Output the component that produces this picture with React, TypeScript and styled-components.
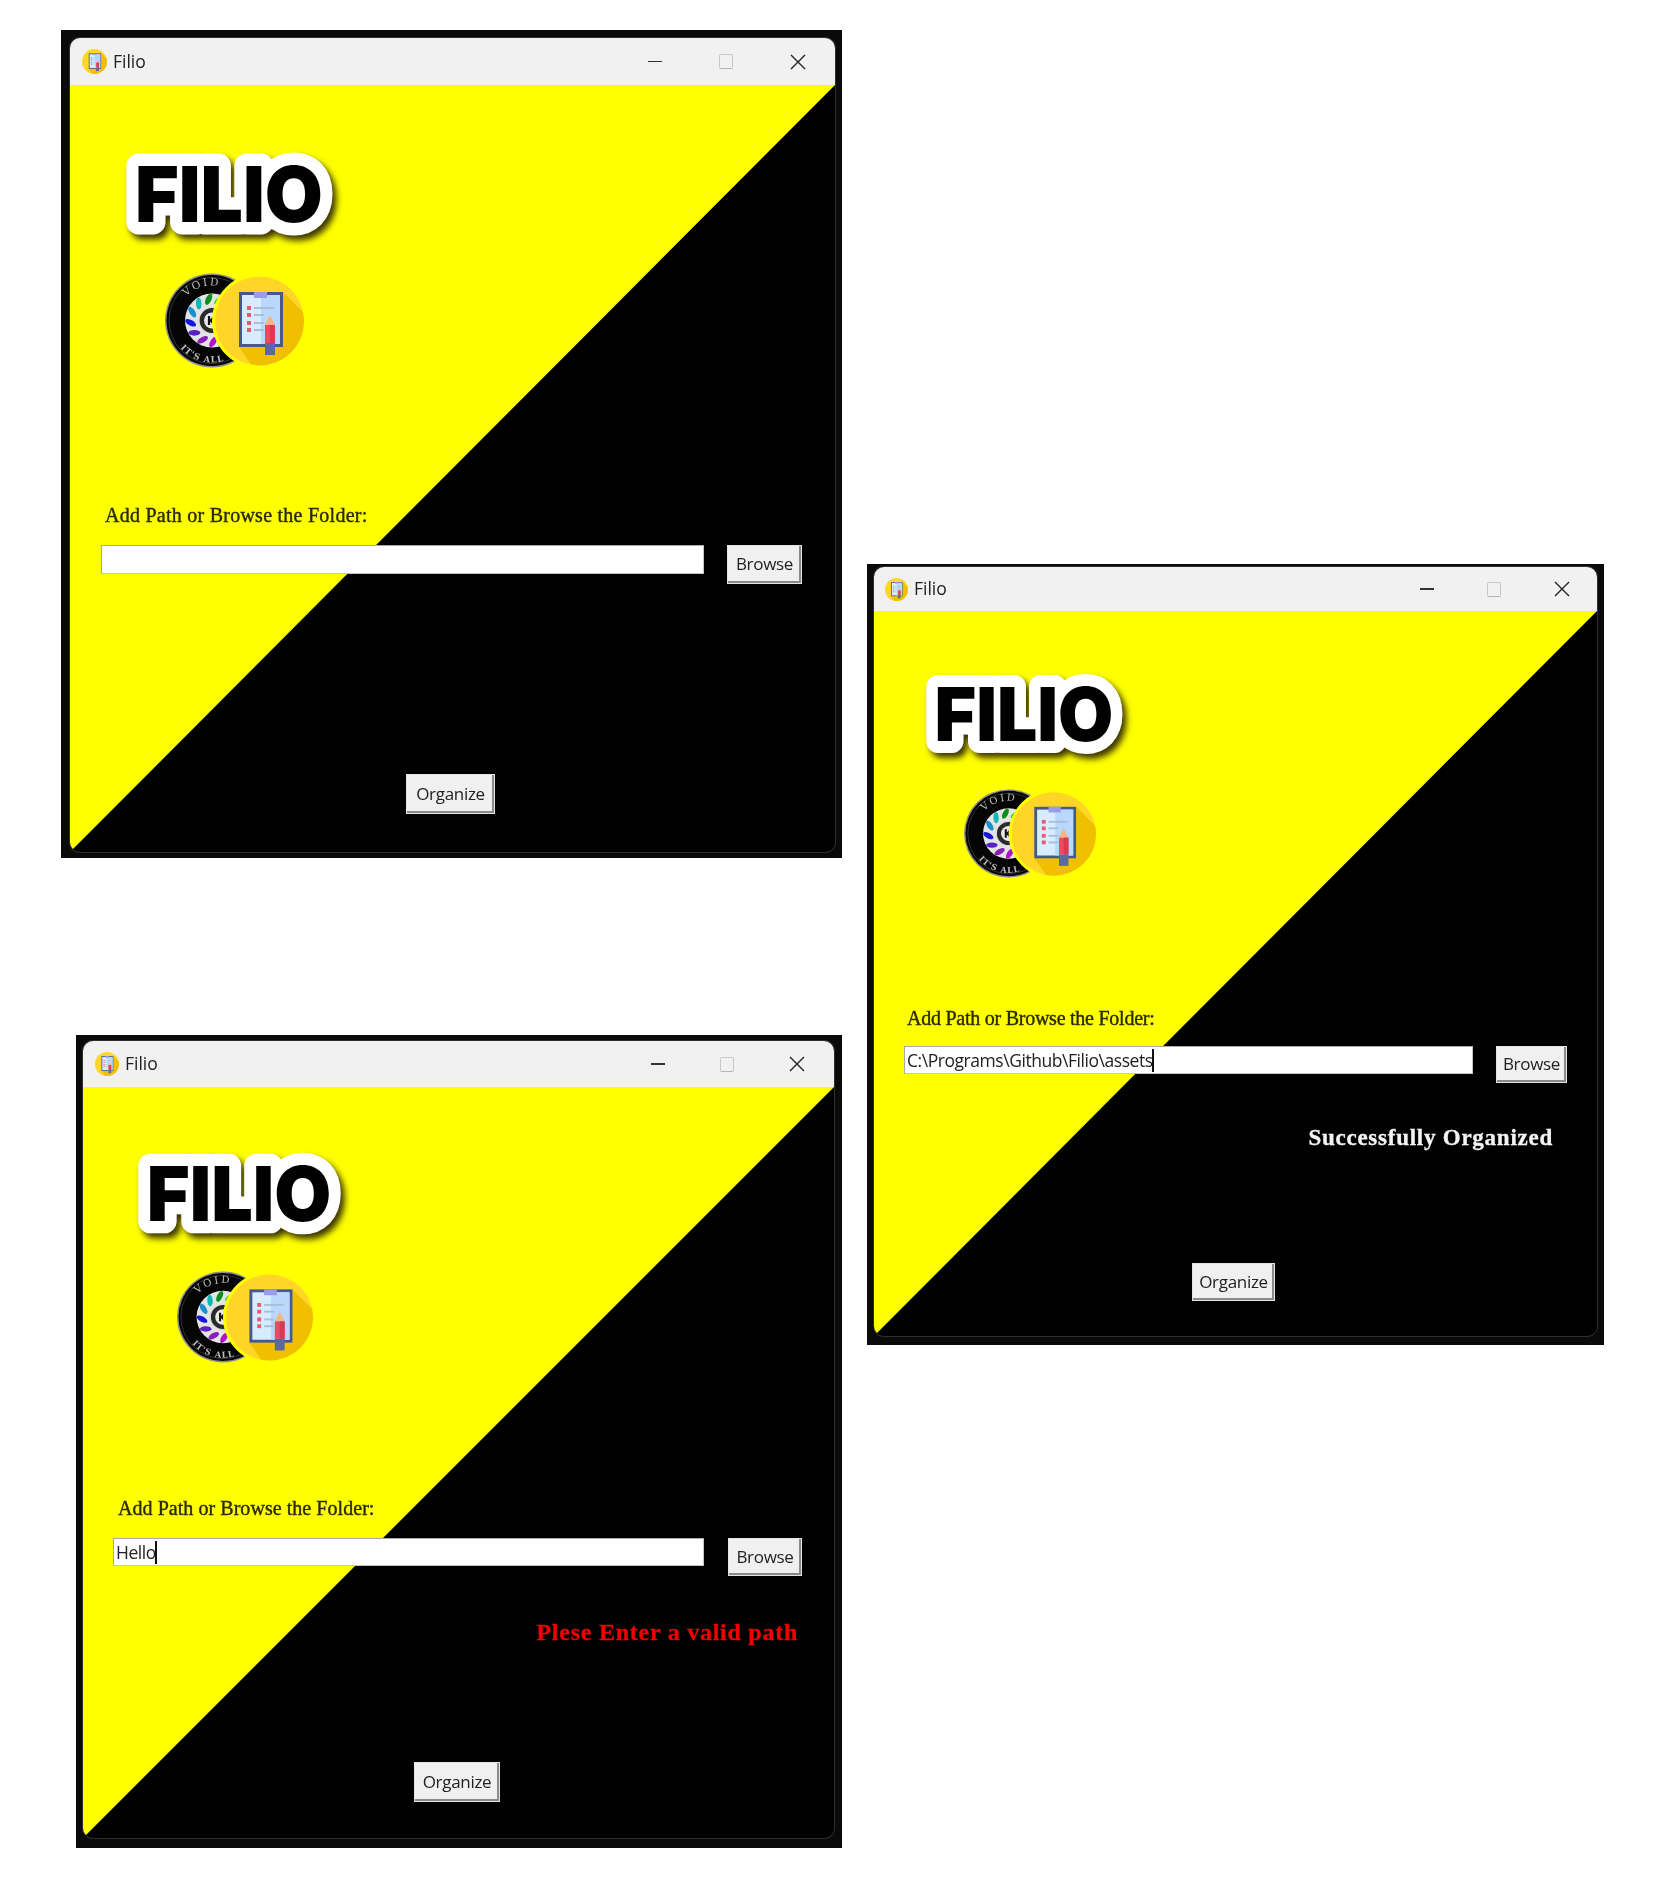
import React, { useId } from "react";
import styled, { createGlobalStyle } from "styled-components";

const GlobalStyle = createGlobalStyle`
  html, body { margin: 0; padding: 0; background: #fff; }
`;

interface Layout {
  left: number; top: number; width: number; height: number;
  pad: string;
  titleHeight: number; titleLeft: number; iconSize: number; ctrlGap: number; ctrlRight: number;
  logo: { left: number; top: number; width: number; height: number };
  seal: { left: number; top: number; width: number; height: number };
  label: { left: number; top: number; spacing: number };
  row: { left: number; top: number; inputWidth: number; inputHeight: number; gap: number; btnWidth: number; btnHeight: number };
  message?: { text: string; color: string; top: number; right: number; size: number };
  organize: { left: number; top: number; width: number; height: number };
  value?: string;
}

const first: Layout = {
  left: 61, top: 30, width: 781, height: 828, pad: "8px 7px 6px 9px",
  titleHeight: 47, titleLeft: 12, iconSize: 25, ctrlGap: 57, ctrlRight: 29,
  logo: { left: 55, top: 69, width: 208, height: 79 },
  seal: { left: 95, top: 40, width: 139, height: 95 },
  label: { left: 35, top: 137, spacing: 0.25 },
  row: { left: 31, top: 20, inputWidth: 603, inputHeight: 29, gap: 23, btnWidth: 75, btnHeight: 39 },
  organize: { left: 336, top: 190, width: 89, height: 40 },
};

const second: Layout = {
  left: 0, top: 564, width: 737, height: 781, pad: "3px 7px 9px 7px",
  titleHeight: 44, titleLeft: 11, iconSize: 23, ctrlGap: 53, ctrlRight: 27,
  logo: { left: 51, top: 65, width: 198, height: 76 },
  seal: { left: 90, top: 37, width: 132, height: 89 },
  label: { left: 33, top: 130, spacing: -0.25 },
  row: { left: 30, top: 18, inputWidth: 569, inputHeight: 28, gap: 23, btnWidth: 71, btnHeight: 37 },
  message: { text: "Successfully Organized", color: "#f4f4f4", top: 43, right: 44, size: 23 },
  organize: { left: 318, top: 113, width: 83, height: 38 },
  value: "C:\\Programs\\Github\\Filio\\assets",
};

const third: Layout = {
  left: 76, top: 177, width: 766, height: 813, pad: "6px 8px 10px 7px",
  titleHeight: 46, titleLeft: 12, iconSize: 24, ctrlGap: 55, ctrlRight: 29,
  logo: { left: 54, top: 67, width: 204, height: 78 },
  seal: { left: 94, top: 39, width: 136, height: 92 },
  label: { left: 35, top: 135, spacing: 0.05 },
  row: { left: 30, top: 20, inputWidth: 591, inputHeight: 28, gap: 24, btnWidth: 74, btnHeight: 38 },
  message: { text: "Plese Enter a valid path", color: "#f00000", top: 44, right: 36, size: 24 },
  organize: { left: 331, top: 118, width: 86, height: 40 },
  value: "Hello",
};

const Page = styled.div`
  width: 1654px;
  height: 1880px;
  display: grid;
  grid-template-columns: 867px 1fr;
  align-items: start;
  overflow: hidden;
`;

const Column = styled.div`
  display: flex;
  flex-direction: column;
  align-items: flex-start;
`;

const Frame = styled.div<{ $l: Layout }>`
  box-sizing: border-box;
  width: ${p => p.$l.width}px;
  height: ${p => p.$l.height}px;
  margin-left: ${p => p.$l.left}px;
  margin-top: ${p => p.$l.top}px;
  padding: ${p => p.$l.pad};
  background: #0a0a0a;
  display: flex;
`;

// the reference is an upscaled screenshot, everything in the window is a little soft
const Win = styled.div`
  flex: 1;
  display: flex;
  flex-direction: column;
  border-radius: 10px;
  overflow: hidden;
  box-shadow: 0 0 0 1px #2e2e2e;
  filter: blur(0.4px);
`;

const TitleBar = styled.div<{ $h: number; $left: number; $right: number }>`
  height: ${p => p.$h}px;
  flex: none;
  background: #f1f1f1;
  display: flex;
  align-items: center;
  padding: 0 ${p => p.$right}px 0 ${p => p.$left}px;
  font-family: "Open Sans", sans-serif;
  font-size: 17.5px;
  color: #222;
`;

const TitleText = styled.span`
  margin-left: 6px;
  margin-top: -2px;
  flex: 1;
`;

const Controls = styled.div<{ $gap: number }>`
  display: flex;
  align-items: center;
  gap: ${p => p.$gap}px;
`;

const Minimize = styled.i`
  display: block;
  width: 14px;
  height: 1.5px;
  background: #333;
`;

const Maximize = styled.i`
  display: block;
  box-sizing: border-box;
  width: 14px;
  height: 15px;
  border: 1.5px solid #c8c8c8;
  border-bottom-color: #b4b4b4;
  border-radius: 2px;
`;

const Body = styled.div`
  flex: 1;
  display: flex;
  flex-direction: column;
  align-items: flex-start;
  background: linear-gradient(to bottom right, #ffff00 calc(50% - 0.5px), #000 calc(50% + 0.5px));
`;

const LogoSvg = styled.svg<{ $left: number; $top: number }>`
  display: block;
  flex: none;
  margin-left: ${p => p.$left}px;
  margin-top: ${p => p.$top}px;
  overflow: visible;
  filter: drop-shadow(4px 5px 3px rgba(40, 32, 0, 0.9));
`;

const SealSvg = styled.svg<{ $left: number; $top: number }>`
  display: block;
  flex: none;
  margin-left: ${p => p.$left}px;
  margin-top: ${p => p.$top}px;
`;

const Label = styled.div<{ $left: number; $top: number; $spacing: number }>`
  margin-left: ${p => p.$left}px;
  margin-top: ${p => p.$top}px;
  font-family: "Liberation Serif", serif;
  font-size: 20px;
  line-height: 20px;
  letter-spacing: ${p => p.$spacing}px;
  color: #2a2a00;
  -webkit-text-stroke: 0.4px #2a2a00;
  white-space: nowrap;
`;

const Row = styled.div<{ $left: number; $top: number; $gap: number }>`
  display: flex;
  align-items: flex-start;
  margin-left: ${p => p.$left}px;
  margin-top: ${p => p.$top}px;
  gap: ${p => p.$gap}px;
`;

const PathInput = styled.div<{ $w: number; $h: number }>`
  box-sizing: border-box;
  width: ${p => p.$w}px;
  height: ${p => p.$h}px;
  background: #fff;
  border: 1px solid #a9a9a9;
  border-bottom-color: #c4c4c4;
  border-right-color: #c4c4c4;
  display: flex;
  align-items: center;
  padding-left: 2px;
  font-family: "Open Sans", sans-serif;
  font-size: 17.5px;
  letter-spacing: -0.45px;
  color: #222;
  white-space: nowrap;
`;

const Caret = styled.span`
  display: inline-block;
  width: 2px;
  height: 23px;
  background: #111;
  margin-left: -1px;
`;

const Button = styled.button<{ $w: number; $h: number; $left?: number; $top?: number }>`
  box-sizing: border-box;
  width: ${p => p.$w}px;
  height: ${p => p.$h}px;
  margin-left: ${p => p.$left ?? 0}px;
  margin-top: ${p => p.$top ?? 0}px;
  padding: 0 0 2px;
  background: #f0f0f0;
  border: 1px solid #e4e4e4;
  border-radius: 0;
  box-shadow: inset -2px -2px 0 #8a8a8a;
  font-family: "Open Sans", sans-serif;
  font-size: 17px;
  letter-spacing: -0.3px;
  color: #222;
`;

const Message = styled.div<{ $color: string; $top: number; $right: number; $size: number }>`
  align-self: flex-end;
  margin-top: ${p => p.$top}px;
  margin-right: ${p => p.$right}px;
  font-family: "Liberation Serif", serif;
  font-weight: 700;
  font-size: ${p => p.$size}px;
  letter-spacing: 0.75px;
  line-height: 24px;
  color: ${p => p.$color};
  -webkit-text-stroke: 0.3px ${p => p.$color};
  white-space: nowrap;
`;

const CloseIcon = () => (
  <svg width="16" height="16" viewBox="0 0 16 16">
    <path d="M1 1 L15 15 M15 1 L1 15" stroke="#222" strokeWidth="1.4" fill="none" />
  </svg>
);

// clipboard with pencil on the round yellow badge, centred on 94.5,48
const AppArt = ({ clip }: { clip: string }) => (
  <g>
    <clipPath id={clip}><circle cx="94.5" cy="48" r="44.5" /></clipPath>
    <circle cx="94.5" cy="48" r="44.5" fill="#ffd528" />
    <g clipPath={`url(#${clip})`}>
      <polygon points="118,19 145,46 145,100 92,100 74,74 118,74" fill="#efbf00" />
    </g>
    <rect x="74" y="19" width="44" height="55" fill="#43598f" />
    <rect x="77" y="22" width="38" height="49" fill="#d8ecff" />
    <rect x="96" y="22" width="19" height="49" fill="#b9d8fb" />
    <rect x="89" y="19" width="13" height="6" fill="#9a9ce8" />
    {[35, 42, 50, 57].map(y => (
      <g key={y}>
        <rect x="82" y={y - 2} width="4" height="4" fill="#f0566e" />
        <rect x="89" y={y - 1} width={y === 35 ? 20 : 10} height="2" fill="#a9bfd6" />
      </g>
    ))}
    <polygon points="100,52 105,42 110,52" fill="#f3b583" />
    <rect x="100" y="52" width="10" height="18" fill="#f0485e" />
    <rect x="105" y="52" width="5" height="18" fill="#d93a50" />
    <rect x="100" y="70" width="10" height="12" fill="#5a6a9c" />
  </g>
);

const petals = ["#2bd63a", "#0c8f1a", "#0fb7b5", "#1a8fd0", "#1616e0", "#5a20c8", "#8a1fb8", "#b012c8", "#c00fd0", "#e81020"];

const Seal = ({ l }: { l: Layout["seal"] }) => {
  const id = useId().replace(/[^a-zA-Z0-9]/g, "");
  return (
    <SealSvg $left={l.left} $top={l.top} width={l.width} height={l.height} viewBox="0 0 139 95" preserveAspectRatio="none">
      <circle cx="47" cy="47.5" r="47" fill="#8c8c8c" />
      <circle cx="47" cy="47.5" r="45.5" fill="#050505" />
      <circle cx="47" cy="47.5" r="43" fill="none" stroke="#555" strokeWidth="0.6" />
      <path id={`${id}top`} d="M 12 47.5 A 35 35 0 0 1 82 47.5" fill="none" />
      <path id={`${id}bot`} d="M 5 47.5 A 42 42 0 0 0 89 47.5" fill="none" />
      <text fontFamily="'DejaVu Serif', serif" fontSize="10.5" fill="#bdbdbd" letterSpacing="2.2">
        <textPath href={`#${id}top`} startOffset="26">VOID</textPath>
      </text>
      <text fontFamily="'DejaVu Serif', serif" fontSize="8.5" fontWeight="700" fill="#bdbdbd" letterSpacing="1">
        <textPath href={`#${id}bot`} startOffset="30">IT'S ALL</textPath>
      </text>
      <circle cx="47" cy="47.5" r="27" fill="#e4e4e4" />
      {petals.map((c, i) => (
        <ellipse key={c} cx="47" cy="26" rx="2.8" ry="6" fill={c} transform={`rotate(${20 - i * 29} 47 47.5) rotate(35 47 26)`} />
      ))}
      <circle cx="47" cy="47.5" r="13" fill="#2a2a2a" stroke="#ddd" strokeWidth="1.2" />
      <circle cx="47" cy="47.5" r="8" fill="#e8e8e8" />
      <path d="M44 43 L44 52 M50 43 L45.5 47.5 L50 52" stroke="#111" strokeWidth="2.2" fill="none" />
      <circle cx="94.5" cy="48" r="47.5" fill="#ffff00" />
      <AppArt clip={`${id}clip`} />
    </SealSvg>
  );
};

const AppIcon = ({ size }: { size: number }) => {
  const id = useId().replace(/[^a-zA-Z0-9]/g, "");
  return (
    <svg width={size} height={size} viewBox="50 3.5 89 89" style={{ flex: "none" }}>
      <AppArt clip={`${id}icon`} />
    </svg>
  );
};

const Logo = ({ l }: { l: Layout["logo"] }) => (
  <LogoSvg $left={l.left} $top={l.top} width={l.width} height={l.height} viewBox="0 0 208 79" preserveAspectRatio="none">
    <text
      x="10"
      y="68"
      textLength="188"
      lengthAdjust="spacingAndGlyphs"
      fontFamily="Inter, 'Liberation Sans', sans-serif"
      fontWeight="900"
      fontSize="77"
      fill="#000"
      stroke="#fff"
      strokeWidth="25"
      strokeLinejoin="round"
      paintOrder="stroke"
    >
      FILIO
    </text>
  </LogoSvg>
);

const FilioWindow = ({ l }: { l: Layout }) => (
  <Frame $l={l}>
    <Win>
      <TitleBar $h={l.titleHeight} $left={l.titleLeft} $right={l.ctrlRight}>
        <AppIcon size={l.iconSize} />
        <TitleText>Filio</TitleText>
        <Controls $gap={l.ctrlGap}>
          <Minimize />
          <Maximize />
          <CloseIcon />
        </Controls>
      </TitleBar>
      <Body>
        <Logo l={l.logo} />
        <Seal l={l.seal} />
        <Label $left={l.label.left} $top={l.label.top} $spacing={l.label.spacing}>Add Path or Browse the Folder:</Label>
        <Row $left={l.row.left} $top={l.row.top} $gap={l.row.gap}>
          <PathInput $w={l.row.inputWidth} $h={l.row.inputHeight}>
            {l.value}
            {l.value && <Caret />}
          </PathInput>
          <Button $w={l.row.btnWidth} $h={l.row.btnHeight}>Browse</Button>
        </Row>
        {l.message && (
          <Message $color={l.message.color} $top={l.message.top} $right={l.message.right} $size={l.message.size}>
            {l.message.text}
          </Message>
        )}
        <Button $w={l.organize.width} $h={l.organize.height} $left={l.organize.left} $top={l.organize.top}>
          Organize
        </Button>
      </Body>
    </Win>
  </Frame>
);

export default function App() {
  return (
    <Page>
      <GlobalStyle />
      <Column>
        <FilioWindow l={first} />
        <FilioWindow l={third} />
      </Column>
      <Column>
        <FilioWindow l={second} />
      </Column>
    </Page>
  );
}
